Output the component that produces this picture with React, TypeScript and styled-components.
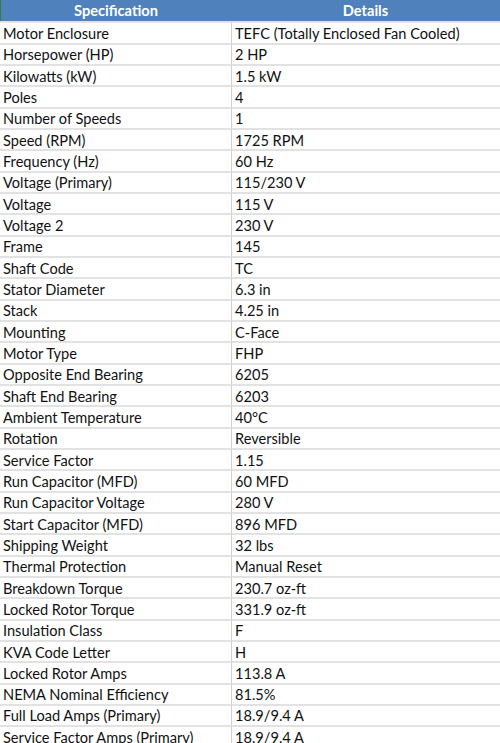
import styled, { createGlobalStyle } from 'styled-components';

const specs: [string, string][] = [
  ['Motor Enclosure', 'TEFC (Totally Enclosed Fan Cooled)'],
  ['Horsepower (HP)', '2 HP'],
  ['Kilowatts (kW)', '1.5 kW'],
  ['Poles', '4'],
  ['Number of Speeds', '1'],
  ['Speed (RPM)', '1725 RPM'],
  ['Frequency (Hz)', '60 Hz'],
  ['Voltage (Primary)', '115/230 V'],
  ['Voltage', '115 V'],
  ['Voltage 2', '230 V'],
  ['Frame', '145'],
  ['Shaft Code', 'TC'],
  ['Stator Diameter', '6.3 in'],
  ['Stack', '4.25 in'],
  ['Mounting', 'C-Face'],
  ['Motor Type', 'FHP'],
  ['Opposite End Bearing', '6205'],
  ['Shaft End Bearing', '6203'],
  ['Ambient Temperature', '40°C'],
  ['Rotation', 'Reversible'],
  ['Service Factor', '1.15'],
  ['Run Capacitor (MFD)', '60 MFD'],
  ['Run Capacitor Voltage', '280 V'],
  ['Start Capacitor (MFD)', '896 MFD'],
  ['Shipping Weight', '32 lbs'],
  ['Thermal Protection', 'Manual Reset'],
  ['Breakdown Torque', '230.7 oz-ft'],
  ['Locked Rotor Torque', '331.9 oz-ft'],
  ['Insulation Class', 'F'],
  ['KVA Code Letter', 'H'],
  ['Locked Rotor Amps', '113.8 A'],
  ['NEMA Nominal Efficiency', '81.5%'],
  ['Full Load Amps (Primary)', '18.9/9.4 A'],
  ['Service Factor Amps (Primary)', '18.9/9.4 A'],
];

export default function App(): JSX.Element {
  return (
    <>
      <GlobalStyle />
      <Sheet>
        <HeadCell $first>Specification</HeadCell>
        <HeadCell>Details</HeadCell>
        {specs.map(([name, value]) => (
          <Row key={name}>
            <Cell $first>{name}</Cell>
            <Cell>{value}</Cell>
          </Row>
        ))}
      </Sheet>
    </>
  );
}

const GlobalStyle = createGlobalStyle`
  html, body {
    margin: 0;
    padding: 0;
    background: #ffffff;
    overflow: hidden;
  }
`;

const Sheet = styled.div`
  display: grid;
  grid-template-columns: 231px 269px;
  grid-auto-rows: 21.33px;
  width: 500px;
  font-family: Lato, 'Open Sans', sans-serif;
  font-size: 14.6px;
  color: #111111;
`;

const HeadCell = styled.div<{ $first?: boolean }>`
  display: flex;
  align-items: center;
  justify-content: center;
  background: #4f81bd;
  color: #ffffff;
  font-weight: 700;
  border-left: ${(p) => (p.$first ? '1px solid #2f7d3a' : 'none')};
`;

const Row = styled.div`
  display: contents;
`;

const Cell = styled.div<{ $first?: boolean }>`
  display: flex;
  align-items: center;
  padding: 1px 0 0 3px;
  border-top: 2px solid #e2e2e2;
  border-left: ${(p) => (p.$first ? 'none' : '1px solid #d0d0d0')};
  white-space: nowrap;
  overflow: hidden;
`;
